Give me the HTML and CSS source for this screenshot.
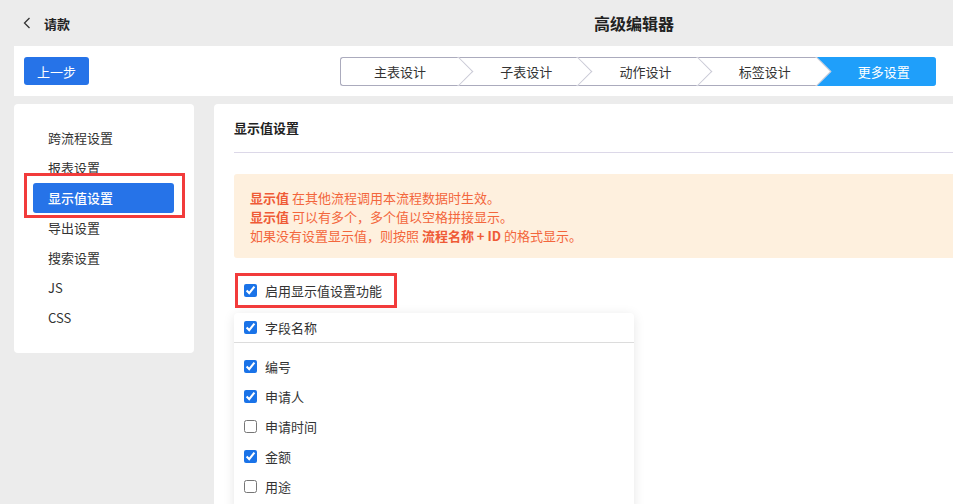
FILE: index.html
```html
<!DOCTYPE html>
<html lang="zh-CN">
<head>
  <meta charset="UTF-8">
  <meta name="viewport" content="width=device-width, initial-scale=1.0">
  <title>高级编辑器</title>
  <link rel="stylesheet" href="styles.css">
</head>
<body>
  <header class="topbar">
    <div class="topbar__back">
      <svg width="8" height="12" viewBox="0 0 8 12"><polyline points="6.5,1 1.5,6 6.5,11" fill="none" stroke="#333" stroke-width="1.3"/></svg>
      <span class="topbar__name">请款</span>
    </div>
    <h1 class="topbar__title">高级编辑器</h1>
  </header>

  <div class="toolbar">
    <button class="btn-prev">上一步</button>
    <div class="steps">
      <div class="step">主表设计</div>
      <div class="step">子表设计</div>
      <div class="step">动作设计</div>
      <div class="step">标签设计</div>
      <div class="step step--active">更多设置</div>
    </div>
  </div>

  <div class="content">
    <ul class="side-menu">
      <li class="side-menu__item">跨流程设置</li>
      <li class="side-menu__item">报表设置</li>
      <li class="side-menu__item side-menu__item--active">显示值设置</li>
      <li class="side-menu__item">导出设置</li>
      <li class="side-menu__item">搜索设置</li>
      <li class="side-menu__item">JS</li>
      <li class="side-menu__item">CSS</li>
    </ul>

    <section class="panel">
      <h2 class="panel__title">显示值设置</h2>
      <div class="notice">
        <p><b>显示值</b> 在其他流程调用本流程数据时生效。</p>
        <p><b>显示值</b> 可以有多个，多个值以空格拼接显示。</p>
        <p>如果没有设置显示值，则按照 <b>流程名称 + ID</b> 的格式显示。</p>
      </div>

      <label class="enable-box">
        <input type="checkbox" checked>
        <span>启用显示值设置功能</span>
      </label>

      <div class="field-list">
        <label class="field-list__head">
          <input type="checkbox" checked>
          <span>字段名称</span>
        </label>
        <div class="field-list__body">
          <label class="field"><input type="checkbox" checked><span>编号</span></label>
          <label class="field"><input type="checkbox" checked><span>申请人</span></label>
          <label class="field"><input type="checkbox"><span>申请时间</span></label>
          <label class="field"><input type="checkbox" checked><span>金额</span></label>
          <label class="field"><input type="checkbox"><span>用途</span></label>
        </div>
      </div>
    </section>
  </div>
</body>
</html>
```

FILE: styles.css
```css
*{
  box-sizing:border-box;
}
html, body{
  height:100%;
}
body{
  margin:0;
  background:#ececec;
  font-family:"Noto Sans CJK SC", "Noto Sans", sans-serif;
  font-size:13px;
  color:#333;
  overflow:hidden;
}
ul, p, h1, h2{
  margin:0;
  padding:0;
}

/* top bar */
.topbar{
  display:flex;
  align-items:center;
  height:46px;
}
.topbar__back{
  display:flex;
  align-items:center;
  padding-left:23px;
  gap:13px;
}
.topbar__name{
  font-weight:bold;
  font-size:13px;
  color:#222;
}
.topbar__title{
  margin-left:524px;
  font-size:16px;
  font-weight:bold;
  color:#222;
}

/* toolbar */
.toolbar{
  display:flex;
  align-items:center;
  justify-content:space-between;
  height:50px;
  margin-left:14px;
  padding:0 17px 0 10px;
  background:#fff;
}
.btn-prev{
  width:65px;
  height:28px;
  border:0;
  border-radius:3px;
  background:#2673e8;
  color:#fff;
  font-family:inherit;
  font-size:13px;
}
.steps{
  display:flex;
  width:596px;
  height:29px;
}
.step{
  position:relative;
  flex:none;
  width:20%;
  display:flex;
  align-items:center;
  justify-content:center;
  padding-left:15px;
  border-top:1px solid #ababbd;
  border-bottom:1px solid #ababbd;
  background:#fff;
  color:#333;
}
.step:first-child{
  padding-left:0;
  border-left:1px solid #ababbd;
  border-radius:3px 0 0 3px;
}
.step::after{
  content:"";
  position:absolute;
  z-index:1;
  top:3px;
  right:-10px;
  width:20px;
  height:20px;
  background:#fff;
  border-top:1px solid #cacad6;
  border-right:1px solid #cacad6;
  transform:rotate(45deg);
}
.step--active{
  background:#1f9ffa;
  border-color:#1f9ffa;
  border-radius:0 3px 3px 0;
  color:#fff;
}
.step--active::after{
  display:none;
}

/* content */
.content{
  display:flex;
  gap:20px;
  margin-top:8px;
  padding-left:14px;
  height:calc(100% - 104px);
}
.side-menu{
  list-style:none;
  flex:none;
  align-self:flex-start;
  width:180px;
  height:249px;
  padding-top:19px;
  background:#fff;
  border-radius:4px;
}
.side-menu__item{
  height:30px;
  line-height:30px;
  margin:0 20px 0 19px;
  padding-left:15px;
  border-radius:3px;
  color:#333;
}
.side-menu__item--active{
  position:relative;
  background:#2673e8;
  color:#fff;
  font-weight:500;
}
.side-menu__item--active::before{
  content:"";
  position:absolute;
  left:-9px;
  right:-11px;
  top:-10px;
  bottom:-5px;
  border:3px solid #f23b3b;
}

.panel{
  flex:1;
  background:#fff;
  border-radius:4px 0 0 0;
  padding-left:20px;
}
.panel__title{
  height:49px;
  line-height:48px;
  border-bottom:1px solid #dcd8e8;
  font-size:13px;
  font-weight:bold;
  color:#222;
}
.notice{
  margin-top:21px;
  height:84px;
  padding:14px 16px;
  background:#fef0de;
  border-radius:3px 0 0 3px;
  color:#f3663c;
  line-height:19px;
}
.notice b{
  color:#ef5a36;
}

input[type=checkbox]{
  width:13px;
  height:13px;
  margin:0;
  accent-color:#1a73e8;
}
.enable-box{
  display:inline-flex;
  align-items:center;
  gap:8px;
  margin:15px 0 0 1px;
  height:35px;
  padding:0 12px 0 6px;
  border:3px solid #f23b3b;
}
.field-list{
  width:400px;
  margin-top:5px;
  height:200px;
  background:#fff;
  border-radius:4px;
  box-shadow:0 2px 12px rgba(0, 0, 0, 0.1);
}
.field-list__head{
  display:flex;
  align-items:center;
  gap:8px;
  height:30px;
  padding-left:10px;
  border-bottom:1px solid #dcdcdc;
}
.field-list__body{
  padding-top:8px;
}
.field{
  display:flex;
  align-items:center;
  gap:8px;
  height:30px;
  padding-left:10px;
}
```
